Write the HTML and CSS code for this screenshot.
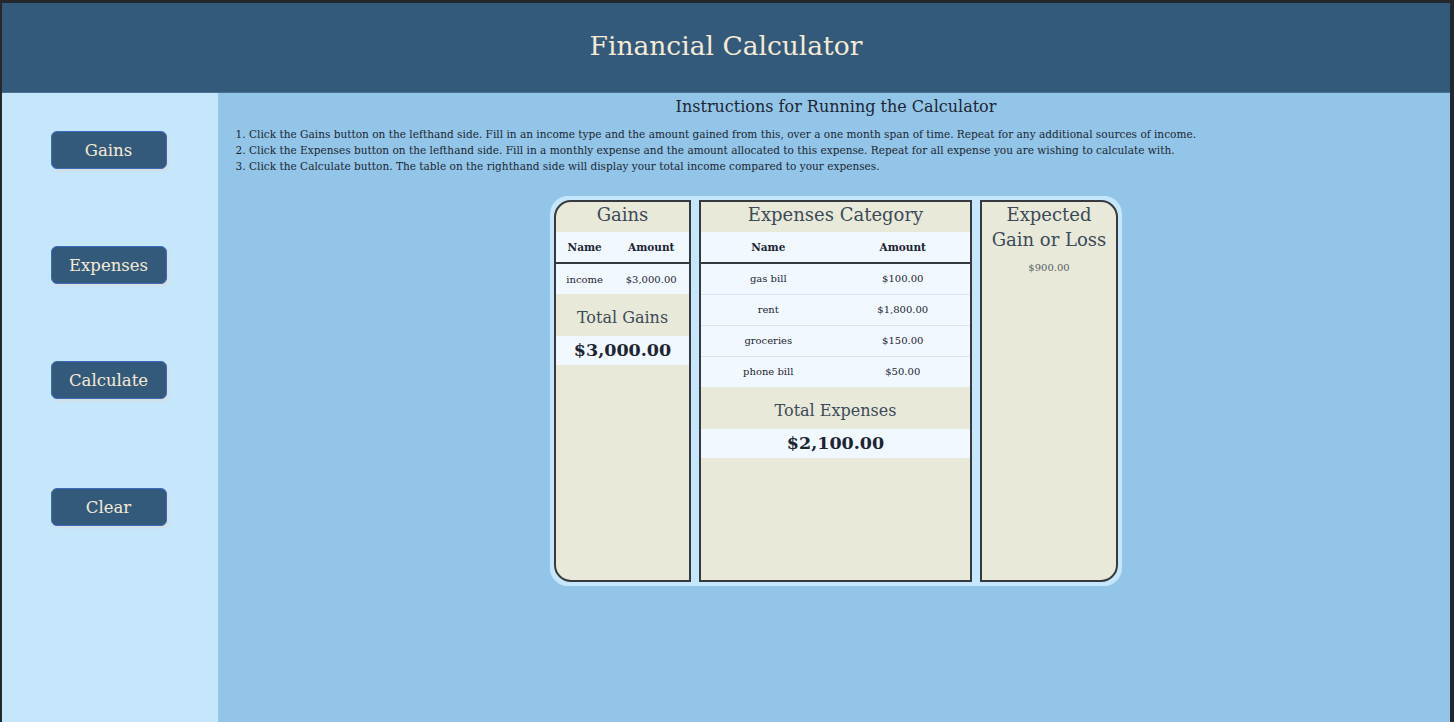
FILE: index.html
```html
<!DOCTYPE html>
<html>
<head>
<meta charset="utf-8">
<title>Financial Calculator</title>
<link rel="stylesheet" href="styles.css">
</head>
<body>
<div class="frame">
  <header class="header"><h1>Financial Calculator</h1></header>
  <div class="body">
    <aside class="sidebar">
      <button class="btn b1">Gains</button>
      <button class="btn b2">Expenses</button>
      <button class="btn b3">Calculate</button>
      <button class="btn b4">Clear</button>
    </aside>
    <main class="main">
      <h2 class="inst-title">Instructions for Running the Calculator</h2>
      <ol class="inst">
        <li>Click the Gains button on the lefthand side. Fill in an income type and the amount gained from this, over a one month span of time. Repeat for any additional sources of income.</li>
        <li>Click the Expenses button on the lefthand side. Fill in a monthly expense and the amount allocated to this expense. Repeat for all expense you are wishing to calculate with.</li>
        <li>Click the Calculate button. The table on the righthand side will display your total income compared to your expenses.</li>
      </ol>
      <div class="tables">
        <section class="col col-gains">
          <h3 class="col-title">Gains</h3>
          <table class="tbl">
            <thead><tr><th>Name</th><th>Amount</th></tr></thead>
            <tbody><tr><td>income</td><td>$3,000.00</td></tr></tbody>
          </table>
          <div class="total-label">Total Gains</div>
          <div class="total-value">$3,000.00</div>
        </section>
        <section class="col col-exp">
          <h3 class="col-title">Expenses Category</h3>
          <table class="tbl half">
            <thead><tr><th>Name</th><th>Amount</th></tr></thead>
            <tbody>
              <tr><td>gas bill</td><td>$100.00</td></tr>
              <tr><td>rent</td><td>$1,800.00</td></tr>
              <tr><td>groceries</td><td>$150.00</td></tr>
              <tr><td>phone bill</td><td>$50.00</td></tr>
            </tbody>
          </table>
          <div class="total-label">Total Expenses</div>
          <div class="total-value">$2,100.00</div>
        </section>
        <section class="col col-net">
          <h3 class="col-title two">Expected Gain or Loss</h3>
          <div class="net">$900.00</div>
        </section>
      </div>
    </main>
  </div>
</div>
</body>
</html>
```

FILE: styles.css
```css
* { box-sizing: border-box; }
html, body { margin: 0; padding: 0; height: 100%; }
body {
  background: #24282d;
  font-family: "DejaVu Serif", Georgia, serif;
  overflow: hidden;
}
.frame {
  margin: 3px 4px 0 2px;
  height: calc(100% - 3px);
  display: flex;
  flex-direction: column;
}
.header {
  background: #335a7b;
  height: 90px;
  border-bottom: 1px solid #4a6f8f;
  display: flex;
  align-items: center;
  justify-content: center;
}
.header h1 {
  margin: 0;
  font-weight: normal;
  font-size: 26.5px;
  color: #f6ead6;
  padding-bottom: 4px;
}
.body {
  flex: 1;
  display: flex;
}
.sidebar {
  width: 216px;
  background: #c5e6fb;
  display: flex;
  flex-direction: column;
  align-items: center;
  padding-top: 38px;
  padding-right: 3px;
}
.btn {
  width: 116px;
  height: 38px;
  background: #335a7b;
  color: #f6ead6;
  font-family: inherit;
  font-size: 16.5px;
  border: 1px solid #3a6bc0;
  border-radius: 6px;
  box-shadow: 2px 2px 2px #d9dde0;
  padding: 0 0 0;
}
.b2 { margin-top: 77px; }
.b3 { margin-top: 77px; }
.b4 { margin-top: 89px; }
.main {
  flex: 1;
  background: #92c5e8;
  padding: 3px 0 0 4px;
}
.inst-title {
  margin: 0;
  text-align: center;
  font-weight: normal;
  font-size: 16px;
  color: #1d2532;
  line-height: 22px;
}
.inst {
  margin: 8px 0 0 0;
  padding-left: 27px;
  font-size: 10.55px;
  line-height: 16px;
  color: #1d2532;
}
.tables {
  margin: 22px auto 0;
  width: 572px;
  height: 390px;
  background: #c5e6fb;
  border-radius: 18px;
  padding: 4px;
  display: flex;
  gap: 8px;
}
.col {
  background: #e8e9d8;
  border: 2px solid #363a3e;
  display: flex;
  flex-direction: column;
}
.col-gains { width: 137px; border-radius: 17px 0 0 17px; }
.col-exp { width: 273px; }
.col-net { width: 138px; border-radius: 0 17px 17px 0; }
.col-title {
  margin: 0;
  font-weight: normal;
  font-size: 18px;
  color: #3c4a58;
  text-align: center;
  height: 30px;
  line-height: 26px;
}
.col-title.two { height: auto; line-height: 25px; padding: 0 6px; }
.tbl {
  width: 100%;
  border-collapse: collapse;
  background: #f2f8ff;
  color: #1d2532;
}
.tbl.half th, .tbl.half td { width: 50%; }
.tbl th {
  font-size: 10.5px;
  font-weight: bold;
  height: 31px;
  border-bottom: 2px solid #363a3e;
  padding: 0 4px;
}
.tbl td {
  font-size: 10px;
  height: 31px;
  text-align: center;
  padding: 0 4px;
  border-bottom: 1px solid #dde4ec;
}
.tbl tbody tr:last-child td { border-bottom: none; }
.total-label {
  height: 42px;
  font-size: 16px;
  color: #3c4a58;
  text-align: center;
  line-height: 48px;
}
.total-value {
  background: #f2f8ff;
  height: 29px;
  line-height: 29px;
  text-align: center;
  font-size: 17.5px;
  font-weight: bold;
  color: #1d2532;
}
.net {
  margin-top: 10px;
  text-align: center;
  font-size: 10px;
  color: #55606a;
}
```
